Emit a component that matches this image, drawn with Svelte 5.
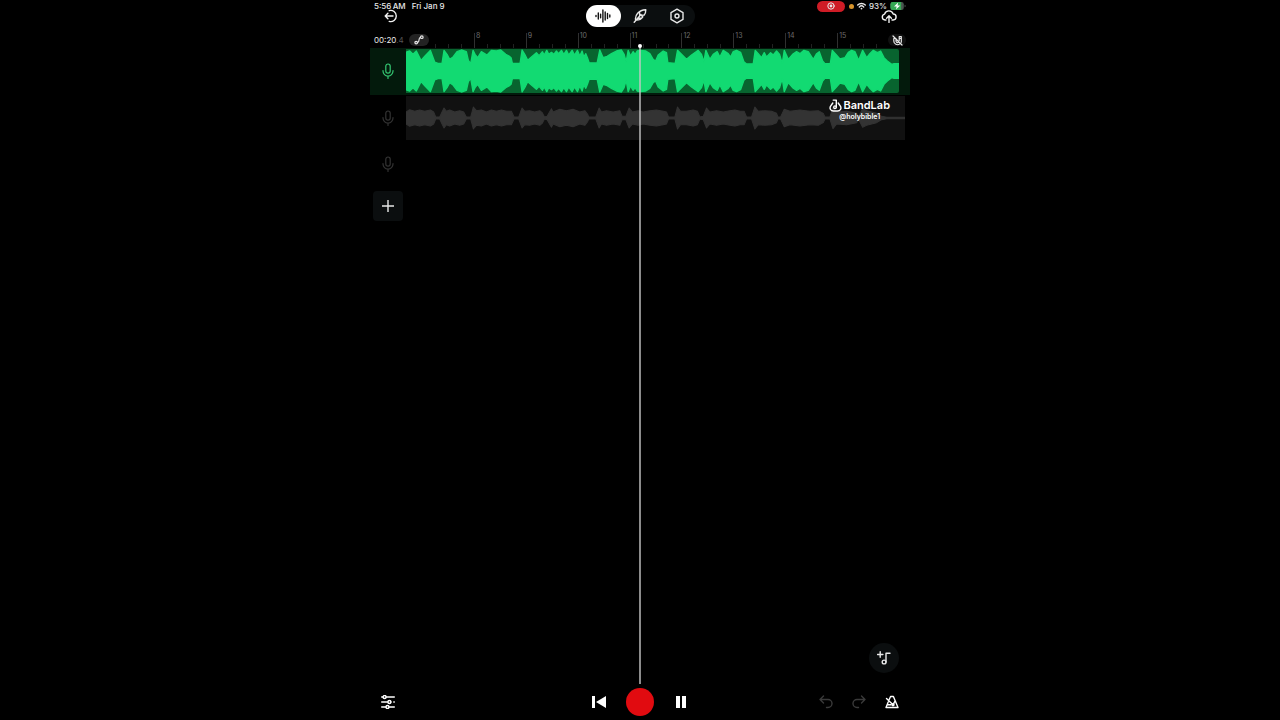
<script>
  const bars = [7, 8, 9, 10, 11, 12, 13, 14, 15];

  // Alternating position / amplitude values of the audio peaks.
  const vocalPeaks = [
    19,56,30,60,40,50,50,60,64,32,76,45,92,62,105,27,115,23,127,23,133,62,142,50,150,35,160,42,172,58,185,63,200,58,206,32,213,22,
    220,62,226,50,234,40,245,58,262,48,275,62,290,60,303,63,318,50,328,45,334,40,338,23,361,23,367,63,375,50,384,32,395,42,410,55,
    418,46,428,58,433,48,441,62,447,50,455,56,462,50,470,60,476,52,485,62,492,50,500,62,507,48,517,62,524,48,533,62,540,45,547,60,
    552,42,558,52,563,40,568,25,592,24,600,63,610,40,622,44,635,52,650,60,665,63,673,50,679,28,685,62,692,45,700,58,706,50,712,60,
    720,62,738,60,750,52,760,35,767,30,775,48,790,60,800,55,804,25,826,23,833,62,845,50,860,35,875,48,895,62,905,50,912,28,918,62,
    930,35,940,50,952,58,960,42,970,62,985,52,992,42,1000,58,1010,62,1022,56,1032,28,1040,21,1060,22,1066,62,1075,52,1085,40,
    1093,55,1100,42,1112,55,1120,48,1130,60,1139,50,1147,23,1153,62,1165,35,1178,50,1190,58,1200,52,1212,62,1225,58,1240,35,
    1250,52,1258,58,1268,30,1275,22,1291,22,1297,62,1308,50,1320,36,1335,40,1345,56,1355,62,1365,58,1376,32,1388,62,1400,40,
    1408,50,1420,62,1432,55,1442,60,1452,40,1462,30,1475,20,1482,22,1497,22
  ];
  const backingPeaks = [
    19,18,30,25,45,20,60,24,75,20,92,24,102,18,108,3,120,3,127,18,133,30,140,20,150,24,165,18,180,22,192,18,200,3,213,3,221,33,
    230,22,245,24,260,18,275,24,290,20,305,24,320,20,335,20,343,3,357,3,367,30,375,20,390,22,405,18,420,22,428,15,434,3,442,5,
    455,28,460,18,480,26,500,22,520,26,540,18,555,22,563,12,567,3,588,3,598,30,605,18,620,22,640,18,660,22,667,5,678,5,688,30,
    698,18,715,22,730,18,750,22,770,24,790,20,800,18,806,3,825,3,833,33,842,20,860,20,880,24,893,20,900,3,910,5,920,30,930,18,
    950,22,970,18,990,22,1005,24,1020,20,1033,20,1040,3,1055,3,1065,33,1075,20,1095,22,1115,20,1130,14,1134,3,1142,3,1153,26,
    1170,20,1200,24,1230,20,1255,22,1270,14,1275,3,1290,3,1299,32,1310,18,1340,20,1370,14,1376,4,1388,28,1400,22,1430,14,1445,5,
    1460,2,1515,2
  ];

  function outline(peaks) {
    const top = [];
    const bottom = [];
    for (let i = 0; i < peaks.length; i += 2) {
      const x = peaks[i] - 19;
      top.push(`${x},${66 - peaks[i + 1]}`);
      bottom.unshift(`${x},${66 + peaks[i + 1]}`);
    }
    return [...top, ...bottom].join(' ');
  }
</script>

{#snippet mic()}
  <svg class="mic" viewBox="0 0 12 16" aria-hidden="true">
    <rect x="3.8" y="1" width="4.4" height="9.2" rx="2.2" />
    <path d="M1 7.5v.6a5 5 0 0 0 10 0v-.6M6 13.2V15.5" />
  </svg>
{/snippet}

<div class="app">
  <header class="top">
    <div class="side">
      <div class="status"><span>5:56&#8198;AM</span><span class="date">Fri Jan 9</span></div>
      <button class="icon back" aria-label="Back">
        <svg width="14" height="14" viewBox="0 0 14 14"><path d="M5.2 1.6A5.6 5.6 0 1 1 5.2 12.4M9 7H1.2M3.9 4.3 1.2 7l2.7 2.7" /></svg>
      </button>
    </div>

    <nav class="modes">
      <button class="mode active" aria-label="Tracks">
        <svg width="16" height="14" viewBox="0 0 16 14"><path d="M1 6.4v1.2M3.3 4v6M5.6 5.2v3.6M7.9 1v12M10.2 3v8M12.5 4.5v5M14.8 6v2" /></svg>
      </button>
      <button class="mode" aria-label="Lyrics">
        <svg width="14" height="14" viewBox="0 0 14 14"><path d="M1.200 13.200 8 5.500M2.600 11C1.800 6 5.500 1.200 12.800.8c0 2.200-.5 4-1.600 5.200L8.400 6.400l1.400 1.400C8.400 10 6 11.200 2.600 11ZM6.600 3.600v3.200M5 9.200h3.400" /></svg>
      </button>
      <button class="mode" aria-label="Settings">
        <svg width="14" height="16" viewBox="0 0 14 16"><path d="M7 1.200 13 4.600v6.800L7 14.800 1 11.400V4.600Z" /><circle cx="7" cy="8" r="2" /></svg>
      </button>
    </nav>

    <div class="side right">
      <div class="status">
        <span class="recording"><svg width="8" height="8" viewBox="0 0 8 8"><circle cx="4" cy="4" r="3.200" /><circle class="dot" cx="4" cy="4" r="1.400" /></svg></span>
        <span class="mic-dot"></span>
        <svg class="wifi" width="9" height="8" viewBox="0 0 9 8"><path d="M.7 3.100a5.400 5.400 0 0 1 7.600 0M2.300 4.900a3.200 3.200 0 0 1 4.400 0" /><circle cx="4.500" cy="6.600" r=".9" /></svg>
        <span>93%</span>
        <svg class="battery" width="16" height="8" viewBox="0 0 17 9"><rect width="15" height="9" rx="2.600" fill="#4a5650" /><path d="M2.600 0H12v9H2.600A2.600 2.600 0 0 1 0 6.400V2.600A2.600 2.600 0 0 1 2.600 0Z" fill="#35a853" /><path d="M16 3v3q1-.5 1-1.500T16 3Z" fill="#66706b" /><path d="M8.700.5 4 5h3l-.8 3.500L11 4H8Z" fill="#fff" /></svg>
      </div>
      <button class="icon cloud" aria-label="Save to cloud">
        <svg width="16" height="14" viewBox="0 0 16 14"><path d="M5 11H4A3 3 0 0 1 3.600 5.100 4.500 4.500 0 0 1 12.200 5 3 3 0 0 1 12 11h-1M8 13.500V7M5.600 9.200 8 6.800l2.400 2.400" /></svg>
      </button>
    </div>
  </header>

  <main>
    <div class="ruler-row">
      <div class="time">00:20<span>.4</span></div>
      <div class="ruler">
        {#each bars as bar, i}
          <div class="bar" class:hidden-start={i === 0}>
            <span>{bar}</span>
            <i></i><i></i><i></i><i></i>
          </div>
        {/each}
        <button class="chip automation" aria-label="Automation">
          <svg width="10" height="10" viewBox="0 0 10 10"><circle cx="2.200" cy="7.600" r="1.300" /><circle cx="7.800" cy="2.200" r="1.300" /><path d="M3.500 7.600C6.200 7.400 3.800 2.600 6.500 2.300" /></svg>
        </button>
        <button class="chip snap" aria-label="Snap to grid">
          <svg width="11" height="11" viewBox="0 0 11 11"><path d="M1.800 3.500V6a3.700 3.700 0 0 0 6 2.900M4 4v2a1.500 1.500 0 0 0 2.400 1.200M9.300 7.200V1.500H7.200v4M1 1l9 9M1.800 3.500H4M7.200 3.300h2.100" /></svg>
        </button>
      </div>
    </div>

    <section class="track selected">
      <button class="head" aria-label="Track 1">{@render mic()}</button>
      <div class="lane">
        <div class="clip vocal">
          <svg viewBox="0 0 1478 132" preserveAspectRatio="none" aria-hidden="true"><polygon points={outline(vocalPeaks)} /></svg>
        </div>
      </div>
    </section>

    <section class="track">
      <button class="head" aria-label="Track 2">{@render mic()}</button>
      <div class="lane">
        <div class="clip backing">
          <svg viewBox="0 0 1496 132" preserveAspectRatio="none" aria-hidden="true"><polygon points={outline(backingPeaks)} /></svg>
        </div>
        <div class="watermark">
          <div class="brand">
            <svg width="13" height="13" viewBox="0 0 13 13"><path d="M3.800 4 1.600 7.200C.2 9.600 1.800 12 4.400 12h4.200c2.600 0 4.200-2.400 2.800-4.800L9.200 4M4.200 1.100h3.100v7" /><circle cx="6" cy="8.200" r="1.300" /></svg>
            <span>BandLab</span>
          </div>
          <div class="handle">@holybible1</div>
        </div>
      </div>
    </section>

    <section class="track">
      <button class="head" aria-label="Track 3">{@render mic()}</button>
    </section>

    <button class="add" aria-label="Add track">
      <svg width="12" height="12" viewBox="0 0 12 12"><path d="M6 0v12M0 6h12" /></svg>
    </button>

    <div class="playhead"></div>

    <button class="loops" aria-label="Add sounds">
      <svg width="14" height="14" viewBox="0 0 14 14"><path d="M3.200.8v5.400M.5 3.500h5.400M9 11V2.200h4" /><circle cx="7.100" cy="11" r="1.900" /></svg>
    </button>
  </main>

  <footer>
    <div class="tools">
      <button class="tool" aria-label="Mixer">
        <svg width="14" height="14" viewBox="0 0 14 14"><path d="M.7 2h1.400M5.200 2h8.100M.7 7h6.200M9.900 7h.1M12.800 7h.5M.7 12h4.200M8 12h5.300" /><circle cx="3.600" cy="2" r="1.500" /><circle cx="8.400" cy="7" r="1.500" /><circle cx="6.500" cy="12" r="1.500" /></svg>
      </button>
    </div>
    <div class="transport">
      <button class="tool solid" aria-label="Skip to start">
        <svg width="14" height="12" viewBox="0 0 14 12"><path d="M0 0h3v12H0ZM14 0v12L4 6Z" /></svg>
      </button>
      <button class="record" aria-label="Record"></button>
      <button class="tool solid" aria-label="Pause">
        <svg width="10" height="12" viewBox="0 0 10 12"><path d="M0 0h4v12H0ZM6 0h4v12H6Z" /></svg>
      </button>
    </div>
    <div class="tools end">
      <button class="tool dim" aria-label="Undo">
        <svg width="14" height="14" viewBox="0 0 14 14"><path d="M4.500 1 1 4.500 4.500 8M1 4.500h8a4 4 0 0 1 0 8H7.500" /></svg>
      </button>
      <button class="tool dim" aria-label="Redo">
        <svg width="14" height="14" viewBox="0 0 14 14"><path d="M9.500 1 13 4.500 9.500 8M13 4.500H5a4 4 0 0 0 0 8h1.500" /></svg>
      </button>
      <button class="tool" aria-label="Metronome">
        <svg width="14" height="14" viewBox="0 0 14 14"><path d="M4.200 4.500 5.600 1.500h2.800L13 12.500H1L3.200 7M1.500 3.500 8 9.800M10 6 8 9.800M3 9.800h2.800" /><circle cx="8" cy="9.800" r="1" /></svg>
      </button>
    </div>
  </footer>
</div>

<style>
  :global(body) {
    margin: 0;
    background: #000;
  }
  .app {
    display: flex;
    flex-direction: column;
    box-sizing: border-box;
    max-width: 540px;
    min-height: 100vh;
    margin: 0 auto;
    color: #e8e8e8;
    font-family: Inter, "Liberation Sans", sans-serif;
  }
  button {
    display: flex;
    align-items: center;
    justify-content: center;
    padding: 0;
    border: 0;
    background: none;
    color: inherit;
    font: inherit;
  }
  svg {
    display: block;
    flex: none;
    fill: none;
    stroke: currentColor;
    stroke-width: 1.4;
    stroke-linecap: round;
    stroke-linejoin: round;
  }
  .top {
    display: grid;
    grid-template-columns: 1fr auto 1fr;
    height: 30px;
  }
  .side {
    display: flex;
    flex-direction: column;
    align-items: flex-start;
    padding: 1px 4px 0;
  }
  .side.right {
    align-items: flex-end;
  }
  .status {
    display: flex;
    align-items: center;
    height: 10px;
    font-size: 8px;
    font-weight: 500;
    line-height: 10px;
    white-space: nowrap;
  }
  .date {
    margin-left: 6px;
  }
  .icon {
    height: 12px;
    margin: -1px 9px 0;
    color: #f2f2f2;
  }
  .back {
    margin-left: 10px;
  }
  .recording {
    display: flex;
    align-items: center;
    justify-content: center;
    width: 28px;
    height: 11px;
    margin-right: 4px;
    border-radius: 6px;
    background: #cf1c26;
  }
  .recording svg {
    stroke-width: 1;
  }
  .recording .dot {
    fill: currentColor;
    stroke: none;
  }
  .mic-dot {
    width: 5px;
    height: 5px;
    margin-right: 3px;
    border-radius: 50%;
    background: #d8942b;
  }
  .wifi {
    margin-right: 3px;
  }
  .wifi circle {
    fill: currentColor;
    stroke: none;
  }
  .battery {
    margin-left: 3px;
    stroke: none;
  }
  .modes {
    display: flex;
    align-self: start;
    gap: 2px;
    height: 22px;
    margin-top: 5px;
    border-radius: 11px;
    background: #0b0e0f;
  }
  .mode {
    width: 35px;
    border-radius: 11px;
  }
  .mode.active {
    background: #fff;
    color: #111;
  }
  main {
    position: relative;
    flex: 1;
  }
  .ruler-row {
    display: flex;
    height: 18px;
  }
  .time {
    box-sizing: border-box;
    flex: none;
    width: 36px;
    padding-left: 4px;
    font-size: 8px;
    line-height: 20px;
    white-space: nowrap;
  }
  .time span {
    color: #555;
  }
  .ruler {
    position: relative;
    display: flex;
    flex: 1;
    padding: 0 21px 0 16px;
  }
  .bar {
    position: relative;
    display: flex;
    flex: 1;
    align-items: flex-end;
  }
  .bar i {
    flex: 1;
    box-sizing: border-box;
    height: 4px;
    border-left: 1px solid #222;
  }
  .bar i:first-of-type {
    height: 15px;
    border-color: #303030;
  }
  .bar span {
    position: absolute;
    top: 1px;
    left: 2px;
    color: #6c6c6c;
    font-size: 7px;
    line-height: 10px;
  }
  .hidden-start span,
  .hidden-start i:first-of-type {
    visibility: hidden;
  }
  .chip {
    position: absolute;
    top: 4px;
    height: 12px;
    border-radius: 6px;
    background: #232323;
  }
  .chip svg {
    stroke-width: 1.2;
  }
  .automation {
    left: 3px;
    width: 20px;
  }
  .snap {
    right: 4px;
    width: 18px;
    background: #111;
  }
  .track {
    display: flex;
    align-items: flex-start;
    height: 46px;
    color: #333;
  }
  .track.selected {
    height: 47px;
    background: #031a0c;
    color: #35c873;
  }
  .head {
    flex: none;
    width: 36px;
    height: 46px;
  }
  .mic {
    width: 12px;
    height: 16px;
    stroke-width: 1.2;
  }
  .lane {
    position: relative;
    flex: 1;
    padding-top: 1px;
  }
  .clip {
    height: 44px;
    overflow: hidden;
  }
  .clip svg {
    width: 100%;
    height: 100%;
    stroke-width: 4;
  }
  .vocal {
    margin-right: 11px;
    border-radius: 0 2px 2px 0;
    background: #08642f;
  }
  .vocal svg {
    fill: #12da72;
    stroke: #12da72;
  }
  .backing {
    margin-right: 5px;
    background: #111;
  }
  .backing svg {
    fill: #333;
    stroke: #333;
    stroke-width: 3;
  }
  .watermark {
    position: absolute;
    top: 3px;
    right: 20px;
    color: #fff;
    text-align: center;
  }
  .brand {
    display: flex;
    align-items: center;
    gap: 1px;
    font-size: 11px;
    font-weight: 600;
    line-height: 14px;
  }
  .handle {
    font-size: 7px;
    font-weight: 600;
    line-height: 9px;
  }
  .add {
    width: 30px;
    height: 30px;
    margin: 4px 3px 0;
    border-radius: 4px;
    background: #0b0e0f;
  }
  .add svg {
    stroke-linecap: butt;
  }
  .playhead {
    position: absolute;
    top: 16px;
    bottom: 0;
    left: 50%;
    width: 2px;
    margin-left: -1px;
    background: rgb(200 200 200 / 70%);
  }
  .playhead::before {
    position: absolute;
    top: -2px;
    left: -1px;
    width: 4px;
    height: 4px;
    border-radius: 50%;
    background: #fff;
    content: "";
  }
  .loops {
    position: absolute;
    right: 11px;
    bottom: 11px;
    width: 30px;
    height: 30px;
    border-radius: 50%;
    background: #0b0e0f;
  }
  footer {
    display: grid;
    grid-template-columns: 1fr auto 1fr;
    align-items: center;
    height: 36px;
  }
  .tools,
  .transport {
    display: flex;
    align-items: center;
    gap: 5px;
    padding: 0 4px;
  }
  .transport {
    gap: 13px;
  }
  .end {
    justify-content: flex-end;
  }
  .tool {
    width: 28px;
    height: 28px;
    color: #fff;
  }
  .dim {
    color: #3a3a3a;
  }
  .solid svg {
    fill: currentColor;
    stroke: none;
  }
  .record {
    width: 28px;
    height: 28px;
    border-radius: 50%;
    background: #e10b10;
  }
</style>
